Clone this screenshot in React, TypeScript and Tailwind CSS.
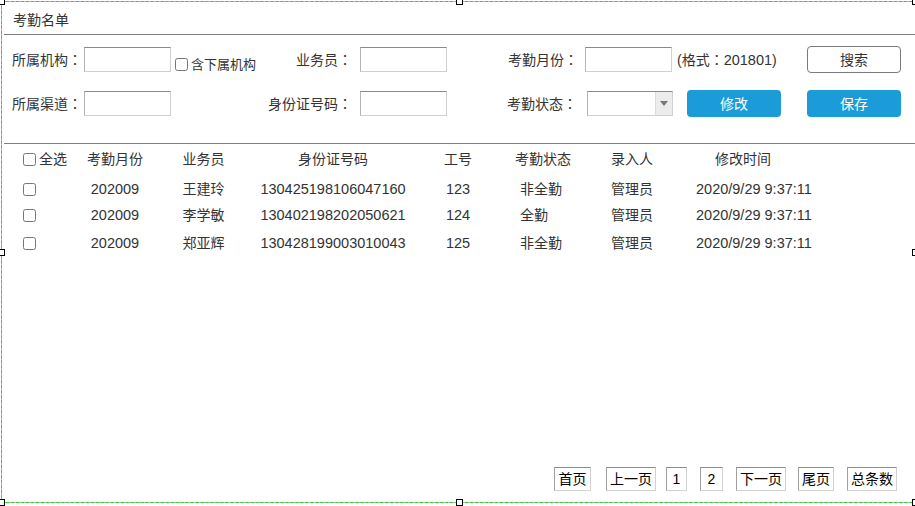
import React from 'react';

const rows = [
  { month: '202009', name: '王建玲', id: '130425198106047160', no: '123', status: '非全勤', by: '管理员', time: '2020/9/29 9:37:11', h: 'h-[26px]' },
  { month: '202009', name: '李学敏', id: '130402198202050621', no: '124', status: '全勤', by: '管理员', time: '2020/9/29 9:37:11', h: 'h-[26px]' },
  { month: '202009', name: '郑亚辉', id: '130428199003010043', no: '125', status: '非全勤', by: '管理员', time: '2020/9/29 9:37:11', h: 'h-[30px]' },
];

const inputCls = 'h-[25px] bg-white border border-[#d0d0d0] border-t-[#8a8a8a] border-l-[#b4b4b4]';
const pageBtn = 'h-[24px] flex items-center justify-center text-black border border-[#d2d2d2] border-t-[#8c8c8c] border-l-[#a0a0a0]';

const Box = () => <input type="checkbox" className="m-0 w-[13px] h-[13px]" />;

// full-width colon drawn centred in its box, as the original font does
const C = () => <span className="font-['Noto_Sans_CJK_JP',sans-serif]">：</span>;

const handles = [
  'left-[-2px] top-[-2px]',
  'left-[456px] top-[-2px]',
  'left-[912px] top-[-2px]',
  'left-[-2px] top-[249px]',
  'left-[912px] top-[249px]',
  'left-[-2px] top-[499px]',
  'left-[456px] top-[499px]',
  'left-[912px] top-[499px]',
];

const App: React.FC = () => {
  return (
    <div className="relative w-[915px] h-[506px] bg-white overflow-hidden text-[14px] leading-none text-[#333] font-['Liberation_Sans','Noto_Sans_CJK_SC',sans-serif]">
      <div className="flex flex-col h-full pl-[4px]">
        {/* title */}
        <div className="h-[35px] pt-[5px] pl-[9px] flex items-center border-b border-[#808080]">考勤名单</div>

        {/* search form */}
        <div className="pt-[11px] pb-[26px] border-b border-[#808080] flex flex-col gap-[17px]">
          <div className="h-[27px] flex items-center pl-[8px]">
            <div className="w-[72px]">所属机构<C /></div>
            <div className={`w-[87px] ${inputCls}`} />
            <div className="w-[189px] h-full flex items-center justify-between">
              <div className="self-end mb-[2px] flex items-center">
                <span className="ml-[4px] flex"><Box /></span>
                <span className="ml-[3px] text-[13px]">含下属机构</span>
              </div>
              <span className="pr-[8px]">业务员<C /></span>
            </div>
            <div className={`w-[87px] ${inputCls}`} />
            <div className="w-[138px] text-right pr-[7px]">考勤月份<C /></div>
            <div className={`w-[87px] ${inputCls}`} />
            <div className="ml-[5px]">(格式<C /><span className="text-[14.5px]">201801</span>)</div>
            <div className="flex-1" />
            <button className="w-[94px] h-[27px] mr-[14px] rounded-[4px] border border-[#7a7a7a] bg-white text-[#333]">搜索</button>
          </div>

          <div className="h-[27px] flex items-center pl-[8px]">
            <div className="w-[72px]">所属渠道<C /></div>
            <div className={`w-[87px] ${inputCls}`} />
            <div className="w-[189px] text-right pr-[8px]">身份证号码<C /></div>
            <div className={`w-[87px] ${inputCls}`} />
            <div className="w-[140px] text-right pr-[10px]">考勤状态<C /></div>
            <div className={`w-[86px] flex ${inputCls}`}>
              <div className="flex-1" />
              <div className="w-[17px] h-full bg-[#ececec] border-l border-[#dcdcdc] flex items-center justify-center">
                <svg width="8" height="5" viewBox="0 0 8 5"><path d="M0 0h8L4 5z" fill="#777" /></svg>
              </div>
            </div>
            <button className="ml-[14px] w-[94px] h-[27px] rounded-[4px] bg-[#1b9cd8] text-white">修改</button>
            <button className="ml-[26px] w-[94px] h-[27px] rounded-[4px] bg-[#1b9cd8] text-white">保存</button>
          </div>
        </div>

        {/* table */}
        <div className="flex flex-col">
          <div className="h-[30px] flex items-center">
            <div className="w-[72px] pl-[19px] flex items-center">
              <Box />
              <span className="ml-[3px]">全选</span>
            </div>
            <div className="w-[78px] text-center">考勤月份</div>
            <div className="w-[99px] text-center">业务员</div>
            <div className="w-[160px] text-center">身份证号码</div>
            <div className="w-[90px] text-center">工号</div>
            <div className="w-[87px] pl-[12px]">考勤状态</div>
            <div className="w-[90px] pl-[21px]">录入人</div>
            <div className="flex-1 pl-[35px]">修改时间</div>
          </div>
          <div className="h-[2px]" />
          {rows.map((r) => (
            <div key={r.id} className={`${r.h} flex items-center`}>
              <div className="w-[72px] pl-[19px] flex items-center">
                <Box />
              </div>
              <div className="w-[78px] text-center text-[14.5px]">{r.month}</div>
              <div className="w-[99px] text-center">{r.name}</div>
              <div className="w-[160px] text-center text-[14.5px]">{r.id}</div>
              <div className="w-[90px] text-center text-[14.5px]">{r.no}</div>
              <div className="w-[87px] pl-[17px]">{r.status}</div>
              <div className="w-[90px] pl-[21px]">{r.by}</div>
              <div className="flex-1 pl-[16px] text-[14.5px]">{r.time}</div>
            </div>
          ))}
        </div>

        <div className="flex-1" />

        {/* pager */}
        <div className="flex justify-end items-center mb-[15px] mr-[18px]">
          <div className={`w-[37px] ${pageBtn}`}>首页</div>
          <div className={`ml-[15px] w-[50px] ${pageBtn}`}>上一页</div>
          <div className={`ml-[10px] w-[21px] ${pageBtn}`}>1</div>
          <div className={`ml-[13px] w-[23px] ${pageBtn}`}>2</div>
          <div className={`ml-[13px] w-[50px] ${pageBtn}`}>下一页</div>
          <div className={`ml-[12px] w-[36px] ${pageBtn}`}>尾页</div>
          <div className={`ml-[13px] w-[50px] ${pageBtn}`}>总条数</div>
        </div>
      </div>

      {/* designer selection frame */}
      <div className="absolute left-[1px] top-[1px] w-[916px] h-[502px] border-l border-t border-b border-[#b8b8b8] pointer-events-none" />
      <div className="absolute left-[1px] top-[1px] w-[916px] h-[502px] border-l border-t border-b border-dashed border-[#2bd62b] pointer-events-none" />
      {handles.map((p) => (
        <div key={p} className={`absolute ${p} w-[7px] h-[7px] bg-white border border-black`} />
      ))}
    </div>
  );
};

export default App;
